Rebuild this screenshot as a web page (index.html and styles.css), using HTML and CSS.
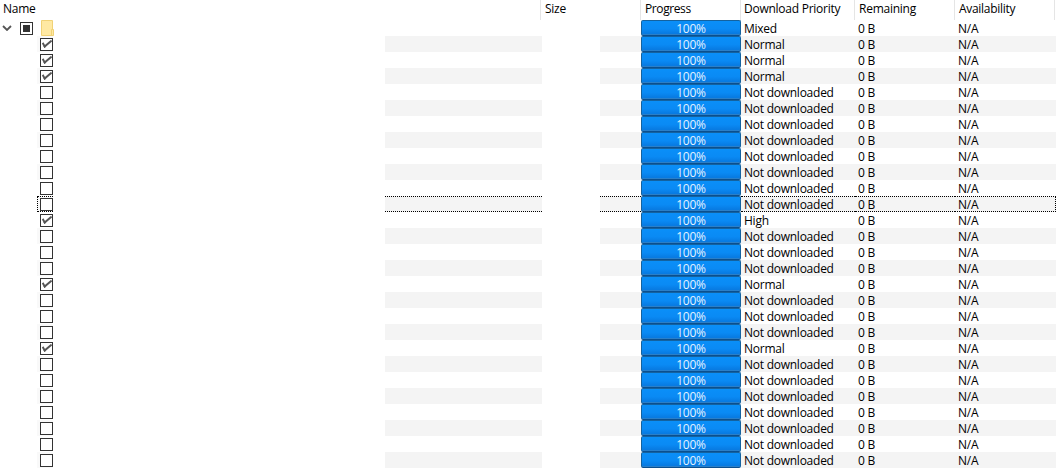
FILE: index.html
```html
<!DOCTYPE html>
<html lang="en">
<head>
<meta charset="utf-8">
<title>Files</title>
<link rel="stylesheet" href="styles.css">
</head>
<body>
<div class="table">
<div class="head">
<div class="th th-name">Name</div>
<div class="th th-size">Size</div>
<div class="th th-prog">Progress</div>
<div class="th th-prio">Download Priority</div>
<div class="th th-rem">Remaining</div>
<div class="th th-av">Availability</div>
</div>
<div class="row root"><div class="tree"><svg class="chev" width="10" height="6" viewBox="0 0 10 6"><path d="M1 1l4 4 4-4" fill="none" stroke="#555" stroke-width="1.8"/></svg><span class="box tri"></span></div><div class="chk"><svg class="folder" width="13" height="16" viewBox="0 0 13 16"><path d="M.5.5h11v15H.5z" fill="#ffe9a3" stroke="#f1d276"/><path d="M10.5 9.5h2v6h-2z" fill="#ffe9a3" stroke="#f1d276"/></svg></div><div class="blank"></div><div class="band"></div><div class="gap"></div><div class="band b2"></div><div class="pc"><div class="bar">100%</div></div><div class="td prio">Mixed</div><div class="td rem">0 B</div><div class="td av">N/A</div></div>
<div class="row alt"><div class="tree"></div><div class="chk"><span class="box on"></span></div><div class="blank"></div><div class="band"></div><div class="gap"></div><div class="band b2"></div><div class="pc"><div class="bar">100%</div></div><div class="td prio">Normal</div><div class="td rem">0 B</div><div class="td av">N/A</div></div>
<div class="row"><div class="tree"></div><div class="chk"><span class="box on"></span></div><div class="blank"></div><div class="band"></div><div class="gap"></div><div class="band b2"></div><div class="pc"><div class="bar">100%</div></div><div class="td prio">Normal</div><div class="td rem">0 B</div><div class="td av">N/A</div></div>
<div class="row alt"><div class="tree"></div><div class="chk"><span class="box on"></span></div><div class="blank"></div><div class="band"></div><div class="gap"></div><div class="band b2"></div><div class="pc"><div class="bar">100%</div></div><div class="td prio">Normal</div><div class="td rem">0 B</div><div class="td av">N/A</div></div>
<div class="row"><div class="tree"></div><div class="chk"><span class="box"></span></div><div class="blank"></div><div class="band"></div><div class="gap"></div><div class="band b2"></div><div class="pc"><div class="bar">100%</div></div><div class="td prio">Not downloaded</div><div class="td rem">0 B</div><div class="td av">N/A</div></div>
<div class="row alt"><div class="tree"></div><div class="chk"><span class="box"></span></div><div class="blank"></div><div class="band"></div><div class="gap"></div><div class="band b2"></div><div class="pc"><div class="bar">100%</div></div><div class="td prio">Not downloaded</div><div class="td rem">0 B</div><div class="td av">N/A</div></div>
<div class="row"><div class="tree"></div><div class="chk"><span class="box"></span></div><div class="blank"></div><div class="band"></div><div class="gap"></div><div class="band b2"></div><div class="pc"><div class="bar">100%</div></div><div class="td prio">Not downloaded</div><div class="td rem">0 B</div><div class="td av">N/A</div></div>
<div class="row alt"><div class="tree"></div><div class="chk"><span class="box"></span></div><div class="blank"></div><div class="band"></div><div class="gap"></div><div class="band b2"></div><div class="pc"><div class="bar">100%</div></div><div class="td prio">Not downloaded</div><div class="td rem">0 B</div><div class="td av">N/A</div></div>
<div class="row"><div class="tree"></div><div class="chk"><span class="box"></span></div><div class="blank"></div><div class="band"></div><div class="gap"></div><div class="band b2"></div><div class="pc"><div class="bar">100%</div></div><div class="td prio">Not downloaded</div><div class="td rem">0 B</div><div class="td av">N/A</div></div>
<div class="row alt"><div class="tree"></div><div class="chk"><span class="box"></span></div><div class="blank"></div><div class="band"></div><div class="gap"></div><div class="band b2"></div><div class="pc"><div class="bar">100%</div></div><div class="td prio">Not downloaded</div><div class="td rem">0 B</div><div class="td av">N/A</div></div>
<div class="row"><div class="tree"></div><div class="chk"><span class="box"></span></div><div class="blank"></div><div class="band"></div><div class="gap"></div><div class="band b2"></div><div class="pc"><div class="bar">100%</div></div><div class="td prio">Not downloaded</div><div class="td rem">0 B</div><div class="td av">N/A</div></div>
<div class="row alt focus"><div class="tree"></div><div class="chk"><span class="box"></span></div><div class="blank"></div><div class="band"></div><div class="gap"></div><div class="band b2"></div><div class="pc"><div class="bar">100%</div></div><div class="td prio">Not downloaded</div><div class="td rem">0 B</div><div class="td av">N/A</div></div>
<div class="row"><div class="tree"></div><div class="chk"><span class="box on"></span></div><div class="blank"></div><div class="band"></div><div class="gap"></div><div class="band b2"></div><div class="pc"><div class="bar">100%</div></div><div class="td prio">High</div><div class="td rem">0 B</div><div class="td av">N/A</div></div>
<div class="row alt"><div class="tree"></div><div class="chk"><span class="box"></span></div><div class="blank"></div><div class="band"></div><div class="gap"></div><div class="band b2"></div><div class="pc"><div class="bar">100%</div></div><div class="td prio">Not downloaded</div><div class="td rem">0 B</div><div class="td av">N/A</div></div>
<div class="row"><div class="tree"></div><div class="chk"><span class="box"></span></div><div class="blank"></div><div class="band"></div><div class="gap"></div><div class="band b2"></div><div class="pc"><div class="bar">100%</div></div><div class="td prio">Not downloaded</div><div class="td rem">0 B</div><div class="td av">N/A</div></div>
<div class="row alt"><div class="tree"></div><div class="chk"><span class="box"></span></div><div class="blank"></div><div class="band"></div><div class="gap"></div><div class="band b2"></div><div class="pc"><div class="bar">100%</div></div><div class="td prio">Not downloaded</div><div class="td rem">0 B</div><div class="td av">N/A</div></div>
<div class="row"><div class="tree"></div><div class="chk"><span class="box on"></span></div><div class="blank"></div><div class="band"></div><div class="gap"></div><div class="band b2"></div><div class="pc"><div class="bar">100%</div></div><div class="td prio">Normal</div><div class="td rem">0 B</div><div class="td av">N/A</div></div>
<div class="row alt"><div class="tree"></div><div class="chk"><span class="box"></span></div><div class="blank"></div><div class="band"></div><div class="gap"></div><div class="band b2"></div><div class="pc"><div class="bar">100%</div></div><div class="td prio">Not downloaded</div><div class="td rem">0 B</div><div class="td av">N/A</div></div>
<div class="row"><div class="tree"></div><div class="chk"><span class="box"></span></div><div class="blank"></div><div class="band"></div><div class="gap"></div><div class="band b2"></div><div class="pc"><div class="bar">100%</div></div><div class="td prio">Not downloaded</div><div class="td rem">0 B</div><div class="td av">N/A</div></div>
<div class="row alt"><div class="tree"></div><div class="chk"><span class="box"></span></div><div class="blank"></div><div class="band"></div><div class="gap"></div><div class="band b2"></div><div class="pc"><div class="bar">100%</div></div><div class="td prio">Not downloaded</div><div class="td rem">0 B</div><div class="td av">N/A</div></div>
<div class="row"><div class="tree"></div><div class="chk"><span class="box on"></span></div><div class="blank"></div><div class="band"></div><div class="gap"></div><div class="band b2"></div><div class="pc"><div class="bar">100%</div></div><div class="td prio">Normal</div><div class="td rem">0 B</div><div class="td av">N/A</div></div>
<div class="row alt"><div class="tree"></div><div class="chk"><span class="box"></span></div><div class="blank"></div><div class="band"></div><div class="gap"></div><div class="band b2"></div><div class="pc"><div class="bar">100%</div></div><div class="td prio">Not downloaded</div><div class="td rem">0 B</div><div class="td av">N/A</div></div>
<div class="row"><div class="tree"></div><div class="chk"><span class="box"></span></div><div class="blank"></div><div class="band"></div><div class="gap"></div><div class="band b2"></div><div class="pc"><div class="bar">100%</div></div><div class="td prio">Not downloaded</div><div class="td rem">0 B</div><div class="td av">N/A</div></div>
<div class="row alt"><div class="tree"></div><div class="chk"><span class="box"></span></div><div class="blank"></div><div class="band"></div><div class="gap"></div><div class="band b2"></div><div class="pc"><div class="bar">100%</div></div><div class="td prio">Not downloaded</div><div class="td rem">0 B</div><div class="td av">N/A</div></div>
<div class="row"><div class="tree"></div><div class="chk"><span class="box"></span></div><div class="blank"></div><div class="band"></div><div class="gap"></div><div class="band b2"></div><div class="pc"><div class="bar">100%</div></div><div class="td prio">Not downloaded</div><div class="td rem">0 B</div><div class="td av">N/A</div></div>
<div class="row alt"><div class="tree"></div><div class="chk"><span class="box"></span></div><div class="blank"></div><div class="band"></div><div class="gap"></div><div class="band b2"></div><div class="pc"><div class="bar">100%</div></div><div class="td prio">Not downloaded</div><div class="td rem">0 B</div><div class="td av">N/A</div></div>
<div class="row"><div class="tree"></div><div class="chk"><span class="box"></span></div><div class="blank"></div><div class="band"></div><div class="gap"></div><div class="band b2"></div><div class="pc"><div class="bar">100%</div></div><div class="td prio">Not downloaded</div><div class="td rem">0 B</div><div class="td av">N/A</div></div>
<div class="row alt"><div class="tree"></div><div class="chk"><span class="box"></span></div><div class="blank"></div><div class="band"></div><div class="gap"></div><div class="band b2"></div><div class="pc"><div class="bar">100%</div></div><div class="td prio">Not downloaded</div><div class="td rem">0 B</div><div class="td av">N/A</div></div>
</div>
</body>
</html>
```
FILE: styles.css
```css
html, body {
  margin: 0;
  background: #fff;
}
.table {
  width: 1055px;
  font: 12px/16px "Open Sans", "Noto Sans", sans-serif;
  color: #000;
}
.head {
  display: flex;
  height: 20px;
}
.th {
  box-sizing: border-box;
  height: 20px;
  line-height: 18px;
  padding-left: 4px;
  border-right: 1px solid #e5e5e5;
  letter-spacing: -0.25px;
}
.th-name { width: 541px; padding-left: 3px; }
.th-size { width: 100px; }
.th-prog { width: 100px; letter-spacing: -0.4px; }
.th-prio { width: 114px; padding-left: 3px; }
.th-rem { width: 100px; }
.th-av { width: 100px; letter-spacing: -0.3px; }
.row {
  display: flex;
  height: 16px;
}
.tree {
  width: 37px;
  display: flex;
  flex: none;
}
.chk {
  width: 16px;
  flex: none;
  box-sizing: border-box;
  padding: 2px 0 0 3px;
}
.blank { width: 332px; flex: none; }
.band { width: 157px; flex: none; }
.gap { width: 58px; flex: none; }
.band.b2 { width: 41px; }
.pc { width: 100px; flex: none; }
.td {
  flex: none;
  box-sizing: border-box;
  padding: 1px 0 0 3px;
  letter-spacing: -0.25px;
  white-space: nowrap;
}
.prio { width: 114px; }
.rem { width: 100px; }
.av { width: 101px; }
.alt .band, .alt .td { background: #f4f4f4; }
.alt .chk { background: #f9f9f9; }
.box {
  display: block;
  box-sizing: border-box;
  width: 13px;
  height: 13px;
  border: 1px solid #333;
  background: #fff;
  position: relative;
}
.box.on::after {
  content: "";
  position: absolute;
  left: 1px;
  top: 1px;
  width: 8px;
  height: 3px;
  border-left: 2px solid #555;
  border-bottom: 2px solid #555;
  transform: rotate(-40deg) skewX(-10deg);
  transform-origin: center;
}
.chev { margin: 5px 0 0 2px; flex: none; }
.root .box.tri {
  margin: 2px 0 0 8px;
  flex: none;
  border-width: 1.5px;
}
.box.tri::after {
  content: "";
  position: absolute;
  left: 2px;
  top: 2px;
  width: 7px;
  height: 7px;
  background: #333;
}
.root .chk { padding: 0 0 0 4px; }
.folder { display: block; }
.bar {
  box-sizing: border-box;
  width: 100px;
  height: 16px;
  border: 1px solid #14629f;
  border-bottom-color: #0a4f8f;
  border-radius: 2px;
  box-shadow: inset 0 -1px 0 #2a7fc8;
  background: linear-gradient(#0a8ff8, #0a8af4 55%, #0776dc);
  color: #e4f2ff;
  text-align: center;
  line-height: 16px;
  letter-spacing: -0.2px;
}
.focus .chk, .focus .band, .focus .td {
  border-top: 1px dotted #000;
  border-bottom: 1px dotted #000;
  box-sizing: border-box;
}
.focus .chk { border-left: 1px dotted #000; padding-top: 1px; padding-left: 2px; }
.focus .td { padding-top: 0; }
.focus .av { border-right: 1px dotted #000; }
```
